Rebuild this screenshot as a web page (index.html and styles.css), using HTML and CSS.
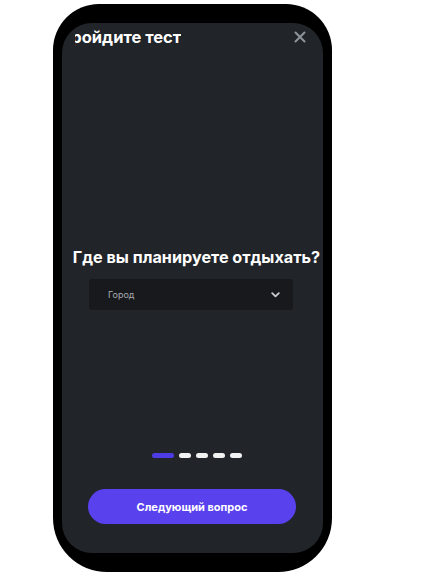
FILE: index.html
```html
<!DOCTYPE html>
<html lang="ru">
<head>
<meta charset="utf-8">
<link rel="stylesheet" href="styles.css">
</head>
<body>
<div class="phone">
  <div class="screen">
    <div class="header">
      <div class="title-clip"><span class="title">Пройдите тест</span></div>
      <svg class="close" width="12" height="12" viewBox="0 0 12 12"><path d="M1.5 1.5L10.5 10.5M10.5 1.5L1.5 10.5" stroke="#8e949b" stroke-width="2" stroke-linecap="round"/></svg>
    </div>
    <div class="question">Где вы планируете отдыхать?</div>
    <div class="select">
      <span class="placeholder">Город</span>
      <svg class="chevron" width="9" height="6" viewBox="0 0 9 6"><path d="M1.2 1.2L4.5 4.4L7.8 1.2" stroke="#c9ccd1" stroke-width="1.8" fill="none" stroke-linecap="round" stroke-linejoin="round"/></svg>
    </div>
    <div class="dots">
      <span class="dot active"></span>
      <span class="dot"></span>
      <span class="dot"></span>
      <span class="dot"></span>
      <span class="dot"></span>
    </div>
    <button class="next">Следующий вопрос</button>
  </div>
</div>
</body>
</html>
```
FILE: styles.css
```css
html, body {
  margin: 0;
  padding: 0;
  background: #ffffff;
}
body {
  font-family: Inter, "Noto Sans", sans-serif;
}
.phone {
  margin: 4px 0 0 53px;
  width: 279px;
  height: 568px;
  box-sizing: border-box;
  padding: 19px 9px;
  background: #000;
  border-radius: 46px 46px 54px 54px;
}
.screen {
  height: 100%;
  background: #212429;
  border-radius: 30px;
  overflow: hidden;
  display: flex;
  flex-direction: column;
  align-items: center;
}
.header {
  align-self: stretch;
  display: flex;
  align-items: center;
  justify-content: space-between;
  height: 27px;
  padding: 0 17px 0 13px;
}
.title-clip {
  overflow: hidden;
  white-space: nowrap;
}
.title {
  display: block;
  color: #ffffff;
  font-weight: 700;
  font-size: 16.5px;
  line-height: 20px;
  margin-left: -16px;
}
.close {
  display: block;
}
.question {
  margin-top: 197px;
  color: #ffffff;
  font-weight: 700;
  font-size: 16.2px;
  white-space: nowrap;
  margin-left: 8px;
}
.select {
  margin-top: 12px;
  width: 204px;
  height: 31px;
  box-sizing: border-box;
  background: #17191c;
  border-radius: 3px;
  display: flex;
  align-items: center;
  justify-content: space-between;
  padding: 0 13px 0 19px;
  margin-left: -3px;
}
.placeholder {
  color: #a9adb3;
  font-size: 9px;
}
.chevron {
  display: block;
}
.dots {
  margin-top: 143px;
  display: flex;
  gap: 5px;
  margin-left: 8px;
}
.dot {
  width: 12px;
  height: 5px;
  border-radius: 3px;
  background: #f2f2f2;
}
.dot.active {
  width: 22px;
  background: #4d3ce6;
}
.next {
  margin-top: 31px;
  width: 208px;
  height: 35px;
  border: none;
  border-radius: 18px;
  background: #5a41ee;
  color: #ffffff;
  font-family: Inter, "Noto Sans", sans-serif;
  font-weight: 700;
  font-size: 11px;
  margin-left: -1px;
}
```
